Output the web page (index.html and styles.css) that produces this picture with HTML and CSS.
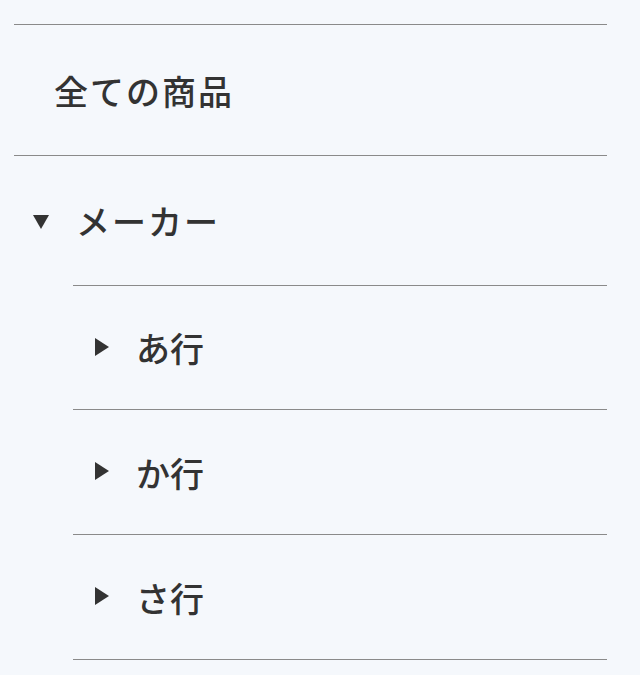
FILE: index.html
```html
<!DOCTYPE html>
<html lang="ja">
<head>
<meta charset="utf-8">
<link rel="stylesheet" href="styles.css">
</head>
<body>
<nav class="sidebar">
  <ul class="menu">
    <li class="menu-item">
      <a class="menu-link plain">全ての商品</a>
    </li>
    <li class="menu-item">
      <a class="menu-link open"><span class="caret caret-down"></span>メーカー</a>
      <ul class="submenu">
        <li class="sub-item"><a class="sub-link"><span class="caret caret-right"></span>あ行</a></li>
        <li class="sub-item"><a class="sub-link"><span class="caret caret-right"></span>か行</a></li>
        <li class="sub-item"><a class="sub-link"><span class="caret caret-right"></span>さ行</a></li>
      </ul>
    </li>
  </ul>
</nav>
</body>
</html>
```
FILE: styles.css
```css
html, body {
  margin: 0;
  padding: 0;
  background: #f5f8fc;
}
body {
  font-family: "Noto Sans CJK JP", "Noto Sans", sans-serif;
  color: #333333;
}
.sidebar {
  padding: 24px 33px 0 14px;
}
.menu, .submenu {
  list-style: none;
  margin: 0;
  padding: 0;
}
.menu-item {
  border-top: 1px solid #8a8a8a;
}
.menu-link {
  display: flex;
  align-items: center;
  height: 130px;
  font-size: 34px;
  font-weight: 500;
  letter-spacing: 2px;
}
.menu-link.plain {
  padding-left: 40px;
}
.menu-link.open {
  height: 129px;
  padding-left: 19px;
}
.submenu {
  margin-left: 59px;
}
.sub-item {
  border-top: 1px solid #8a8a8a;
}
.sub-item:first-child .sub-link {
  height: 123px;
}
.sub-item:last-child {
  border-bottom: 1px solid #8a8a8a;
}
.sub-link {
  display: flex;
  align-items: center;
  height: 124px;
  padding-left: 22px;
  font-size: 34px;
  font-weight: 500;
  letter-spacing: 0;
}
.caret {
  display: inline-block;
  width: 0;
  height: 0;
  border-style: solid;
  border-color: transparent;
}
.caret-down {
  border-width: 14px 8px 0 8px;
  border-top-color: #333333;
  margin-right: 27px;
  margin-top: 2px;
}
.caret-right {
  border-width: 9px 0 9px 14px;
  border-left-color: #333333;
  margin-right: 27px;
  margin-top: -2px;
}
```
